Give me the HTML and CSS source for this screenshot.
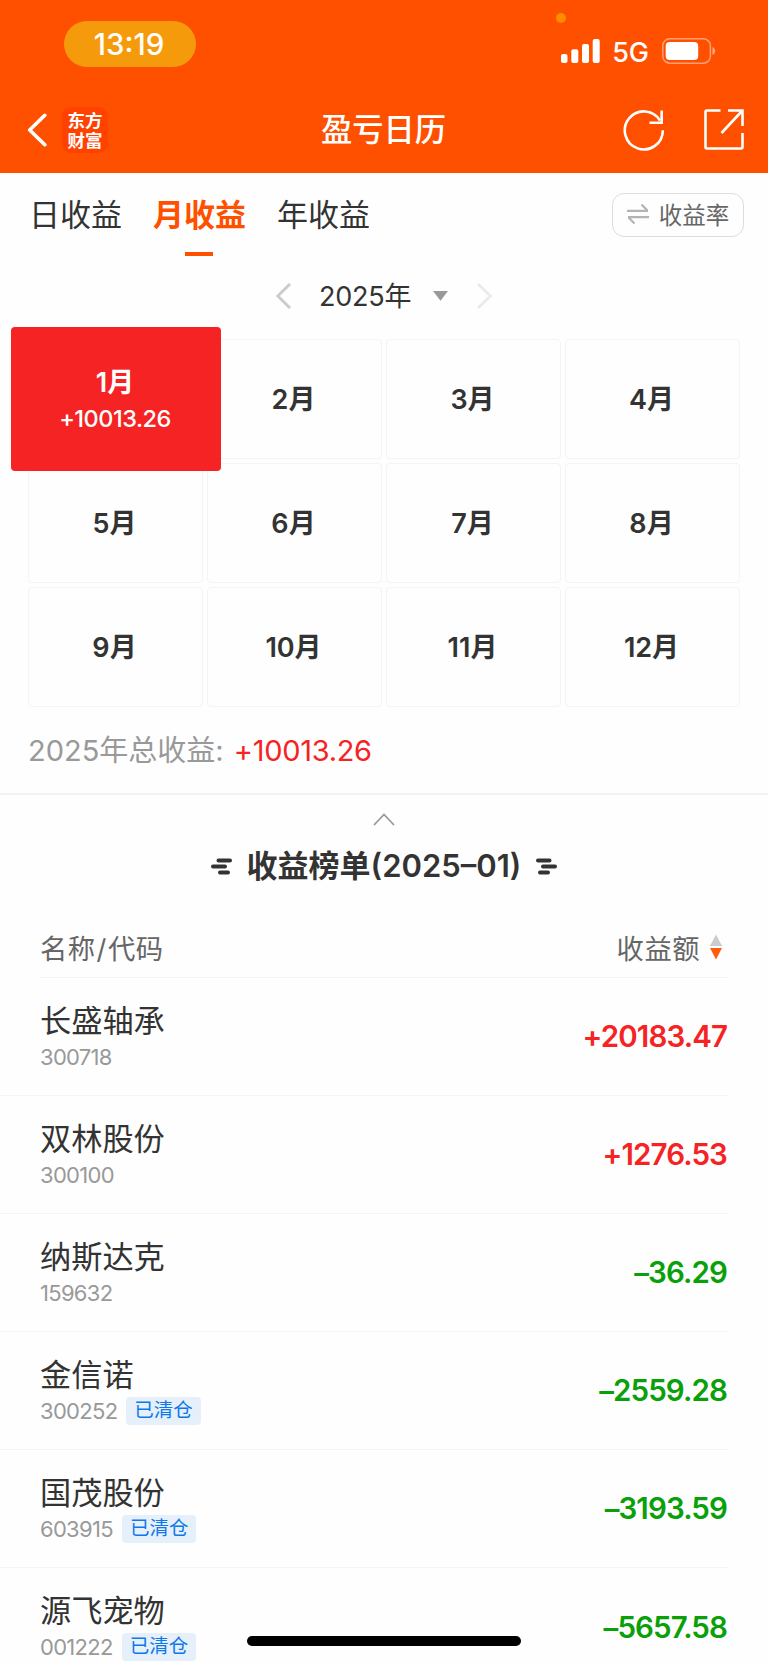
FILE: index.html
```
<!DOCTYPE html>
<html lang="zh-CN">
<head>
    <meta charset="UTF-8">
    <meta name="viewport" content="width=device-width, initial-scale=1">
    <title>盈亏日历</title>
    <link rel="stylesheet" href="styles.css">
</head>
<body>
    <header class="header">
        <div class="status-bar">
            <span class="time">13:19</span>
            <span class="mic-dot"></span>
            <div class="status-icons">
                <svg class="signal" width="39" height="24" viewBox="0 0 39 24" fill="#fff">
                    <rect x="0" y="15" width="6.5" height="9" rx="2"/>
                    <rect x="10.3" y="10.3" width="7" height="13.7" rx="2"/>
                    <rect x="21" y="5" width="7" height="19" rx="2"/>
                    <rect x="31.7" y="0" width="7" height="24" rx="2"/>
                </svg>
                <span class="network">5G</span>
                <svg class="battery" width="54" height="26" viewBox="0 0 54 26">
                    <rect x=".8" y=".8" width="47.6" height="24.4" rx="7" fill="none" stroke="#fff" stroke-opacity=".45" stroke-width="1.5"/>
                    <rect x="3.7" y="4" width="32.5" height="18" rx="4" fill="#fff"/>
                    <path d="M50.5 9v8c3.5-1.5 3.5-6.5 0-8z" fill="#fff" fill-opacity=".5"/>
                </svg>
            </div>
        </div>
        <nav class="nav">
            <div class="nav-side">
                <svg width="20" height="34" viewBox="0 0 20 34" fill="none" stroke="#fff" stroke-width="3.6" stroke-linecap="round" stroke-linejoin="round">
                    <path d="M17.8 2.3L2.7 17l15.1 14.7"/>
                </svg>
                <span class="logo">东方<br>财富</span>
            </div>
            <h1 class="nav-title">盈亏日历</h1>
            <div class="nav-side nav-actions">
                <svg width="42" height="42" viewBox="0 0 42 42" fill="none" stroke="#fff" stroke-width="2.6">
                    <path d="M39.8 21.3A19 19 0 1 1 37 11.5"/>
                    <path d="M38.7 1.5v12.3H26.5"/>
                </svg>
                <svg width="42" height="42" viewBox="0 0 42 42" fill="none" stroke="#fff" stroke-width="2.6">
                    <path d="M17.5 1.500H4Q2.5 1.500 2.500 3v35q0 1.500 1.500 1.500h34q1.500 0 1.500-1.500V24"/>
                    <path d="M25 1.500h14.500V17M39 2L18.500 24"/>
                </svg>
            </div>
        </nav>
    </header>

    <section class="calendar">
        <div class="tab-bar">
            <div class="tabs">
                <span class="tab">日收益</span>
                <span class="tab active">月收益</span>
                <span class="tab">年收益</span>
            </div>
            <button class="toggle">
                <svg width="22" height="20" viewBox="0 0 22 20" fill="none" stroke="#b4b4b4" stroke-width="2.2">
                    <path d="M0 6.800h21M14.500 .5l6 6"/>
                    <path d="M22 13.200H1M7.500 19.500l-6-6"/>
                </svg>
                <span>收益率</span>
            </button>
        </div>

        <div class="year-picker">
            <svg class="prev" width="16" height="26" viewBox="0 0 16 26" fill="none" stroke="#ccc" stroke-width="3">
                <path d="M14 1L1.800 13l12.200 12"/>
            </svg>
            <span class="year">2025年</span>
            <svg class="caret" width="15" height="10" viewBox="0 0 15 10"><path d="M0 0h15L7.500 9.800z" fill="#999"/></svg>
            <svg width="16" height="26" viewBox="0 0 16 26" fill="none" stroke="#ebebeb" stroke-width="3">
                <path d="M1 1l12.300 12L1 25"/>
            </svg>
        </div>

        <div class="months">
            <div class="month active"><b>1月</b><span>+10013.26</span></div>
            <div class="month"><b>2月</b></div>
            <div class="month"><b>3月</b></div>
            <div class="month"><b>4月</b></div>
            <div class="month"><b>5月</b></div>
            <div class="month"><b>6月</b></div>
            <div class="month"><b>7月</b></div>
            <div class="month"><b>8月</b></div>
            <div class="month"><b>9月</b></div>
            <div class="month"><b>10月</b></div>
            <div class="month"><b>11月</b></div>
            <div class="month"><b>12月</b></div>
        </div>

        <p class="total">2025年总收益: <span class="total-value">+10013.26</span></p>
    </section>

    <section class="ranking">
        <div class="collapse">
            <svg width="22" height="13" viewBox="0 0 22 13" fill="none" stroke="#999" stroke-width="1.8"><path d="M1 12L11 1.500 21 12"/></svg>
        </div>
        <h2 class="ranking-title">
            <svg width="21" height="17" viewBox="0 0 21 17" stroke="#333" stroke-width="4" stroke-linecap="round"><path d="M7.500 2.500h11.500M2 8.500h12M9 14.500h8"/></svg>
            <span>收益榜单(2025–01)</span>
            <svg width="21" height="17" viewBox="0 0 21 17" stroke="#333" stroke-width="4" stroke-linecap="round"><path d="M2 2.500h11.500M7 8.500h12M4 14.500h8"/></svg>
        </h2>

        <div class="list-head">
            <span>名称<span class="slash">/</span>代码</span>
            <span class="sort">收益额
                <svg width="12" height="26" viewBox="0 0 12 26"><path d="M6 .5l6 11.500H0z" fill="#ccc"/><path d="M6 25.500L0 14h12z" fill="#ff5d0c"/></svg>
            </span>
        </div>

        <div class="row">
            <div>
                <div class="name">长盛轴承</div>
                <div class="code">300718</div>
            </div>
            <span class="value up">+20183.47</span>
        </div>
        <div class="row">
            <div>
                <div class="name">双林股份</div>
                <div class="code">300100</div>
            </div>
            <span class="value up">+1276.53</span>
        </div>
        <div class="row">
            <div>
                <div class="name">纳斯达克</div>
                <div class="code">159632</div>
            </div>
            <span class="value down">–36.29</span>
        </div>
        <div class="row">
            <div>
                <div class="name">金信诺</div>
                <div class="code">300252<span class="tag">已清仓</span></div>
            </div>
            <span class="value down">–2559.28</span>
        </div>
        <div class="row">
            <div>
                <div class="name">国茂股份</div>
                <div class="code">603915<span class="tag">已清仓</span></div>
            </div>
            <span class="value down">–3193.59</span>
        </div>
        <div class="row">
            <div>
                <div class="name">源飞宠物</div>
                <div class="code">001222<span class="tag">已清仓</span></div>
            </div>
            <span class="value down">–5657.58</span>
        </div>
    </section>

    <div class="home-indicator"></div>
</body>
</html>
```
FILE: styles.css
```
:root {
    --brand: #ff5000;
    --red: #f52323;
    --green: #09a009;
    --text: #333;
    --line: #f4f4f4;
}
* {
    box-sizing: border-box;
}
body {
    position: relative;
    margin: 0;
    height: 1663px;
    overflow: hidden;
    background: #fefefe;
    color: var(--text);
    font-family: Inter, 'Noto Sans CJK SC', sans-serif;
}
svg {
    display: block;
    flex: none;
}

/* Header */
.header {
    height: 173px;
    background: var(--brand);
    color: #fff;
}
.status-bar {
    position: relative;
    height: 88px;
    padding: 21px 52px 0 64px;
    display: flex;
    justify-content: space-between;
    align-items: flex-start;
}
.time {
    width: 132px;
    height: 46px;
    padding-right: 2px;
    border-radius: 23px;
    background: #f59b0b;
    font-size: 29.5px;
    font-weight: 500;
    line-height: 46px;
    text-align: center;
}
.mic-dot {
    position: absolute;
    left: 556px;
    top: 13px;
    width: 10px;
    height: 10px;
    border-radius: 50%;
    background: #ff8c00;
}
.status-icons {
    display: flex;
    align-items: center;
    padding-top: 15px;
}
.network {
    margin: 0 13px 0 12px;
    padding-top: 4px;
    font-size: 27px;
    font-weight: 500;
    line-height: 26px;
}
.nav {
    height: 84px;
    padding: 0 23px 0 27px;
    display: flex;
    align-items: center;
    justify-content: space-between;
}
.nav-side {
    width: 121px;
    display: flex;
    align-items: center;
    gap: 15px;
}
.logo {
    width: 46px;
    height: 46px;
    padding-top: 4px;
    border-radius: 9px;
    background: #ff4200;
    font-size: 17.5px;
    font-weight: 700;
    line-height: 19.5px;
    text-align: center;
}
.nav-title {
    margin: 0;
    font-size: 31.3px;
    font-weight: 500;
    line-height: 44px;
}
.nav-actions {
    width: 126px;
    gap: 38px;
    justify-content: flex-end;
}

/* Tabs */
.tab-bar {
    height: 84px;
    padding: 20px 24px 0 29px;
    display: flex;
    justify-content: space-between;
    align-items: flex-start;
}
.tabs {
    display: flex;
    gap: 31px;
}
.tab {
    display: flex;
    flex-direction: column;
    align-items: center;
    font-size: 31px;
    line-height: 43px;
}
.tab.active {
    color: var(--brand);
    font-weight: 600;
}
.tab.active::after {
    content: '';
    width: 28px;
    height: 4px;
    margin: 16px 1.5px 0 0;
    background: var(--brand);
}
.toggle {
    width: 132px;
    height: 44px;
    padding: 0 0 2px;
    display: flex;
    align-items: center;
    justify-content: center;
    gap: 10px;
    border: 1px solid #ddd;
    border-radius: 12px;
    background: transparent;
    color: #666;
    font-family: inherit;
    font-size: 23.5px;
}

/* Year picker */
.year-picker {
    height: 82px;
    padding: 0 0 4px 276px;
    display: flex;
    align-items: center;
}
.year {
    width: 93px;
    margin: 0 21px 0 27px;
    padding-bottom: 3px;
    font-size: 27px;
    letter-spacing: -.2px;
    white-space: nowrap;
}
.caret {
    margin-right: 29px;
}

/* Months */
.months {
    display: grid;
    grid-template-columns: repeat(4, 1fr);
    grid-auto-rows: 120px;
    gap: 4px;
    padding: 0 28px;
}
.month {
    display: flex;
    flex-direction: column;
    align-items: center;
    justify-content: center;
    padding: 1px 2px 0 0;
    border: 1px solid var(--line);
    border-radius: 4px;
    font-size: 27px;
    line-height: 36px;
}
.month b {
    font-weight: 600;
}
.month.active {
    z-index: 1;
    margin: -12px -17.5px;
    padding: 4px 1px 0 0;
    border: none;
    background: var(--red);
    color: #fff;
}
.month.active span {
    font-size: 23.5px;
    font-weight: 500;
    letter-spacing: -.5px;
}
.total {
    height: 86px;
    margin: 0;
    padding: 22px 28px 0;
    color: #999;
    font-size: 29px;
    line-height: 44px;
}
.total-value {
    margin-left: 2px;
    color: var(--red);
    letter-spacing: -.3px;
}

/* Ranking */
.ranking {
    border-top: 2px solid #f3f3f3;
}
.collapse {
    display: flex;
    justify-content: center;
    padding-top: 18px;
}
.ranking-title {
    height: 44px;
    margin: 18px 0 0;
    display: flex;
    justify-content: center;
    align-items: center;
    gap: 15px;
    font-size: 31px;
    font-weight: 600;
    line-height: 44px;
}
.list-head {
    height: 90px;
    margin: 0 40px;
    padding-top: 28px;
    display: flex;
    justify-content: space-between;
    align-items: center;
    border-bottom: 1px solid var(--line);
    color: #666;
    font-size: 27.3px;
    letter-spacing: .5px;
}
.slash {
    margin: 0 1px;
}
.sort {
    display: flex;
    align-items: center;
    gap: 10px;
    padding-right: 6px;
}
.row {
    height: 118.1px;
    margin-right: 40px;
    padding-left: 40px;
    display: flex;
    justify-content: space-between;
    align-items: center;
    border-bottom: 1px solid var(--line);
}
.name {
    margin-top: -2px;
    font-size: 31.2px;
    line-height: 42px;
}
.code {
    height: 30px;
    display: flex;
    align-items: center;
    gap: 9px;
    color: #999;
    font-size: 22px;
    letter-spacing: -.7px;
}
.tag {
    height: 28px;
    padding: 0 8px;
    border-radius: 4px;
    background: #e6f0fb;
    color: #0e78e8;
    font-size: 19.5px;
    line-height: 27px;
    letter-spacing: 0;
}
.value {
    padding: 0 1px 1px 0;
    font-size: 29.5px;
    font-weight: 600;
    letter-spacing: -.9px;
}
.up {
    color: var(--red);
}
.down {
    color: var(--green);
}

.home-indicator {
    position: absolute;
    left: 247px;
    bottom: 17px;
    width: 274px;
    height: 10px;
    border-radius: 5px;
    background: #000;
}
```
